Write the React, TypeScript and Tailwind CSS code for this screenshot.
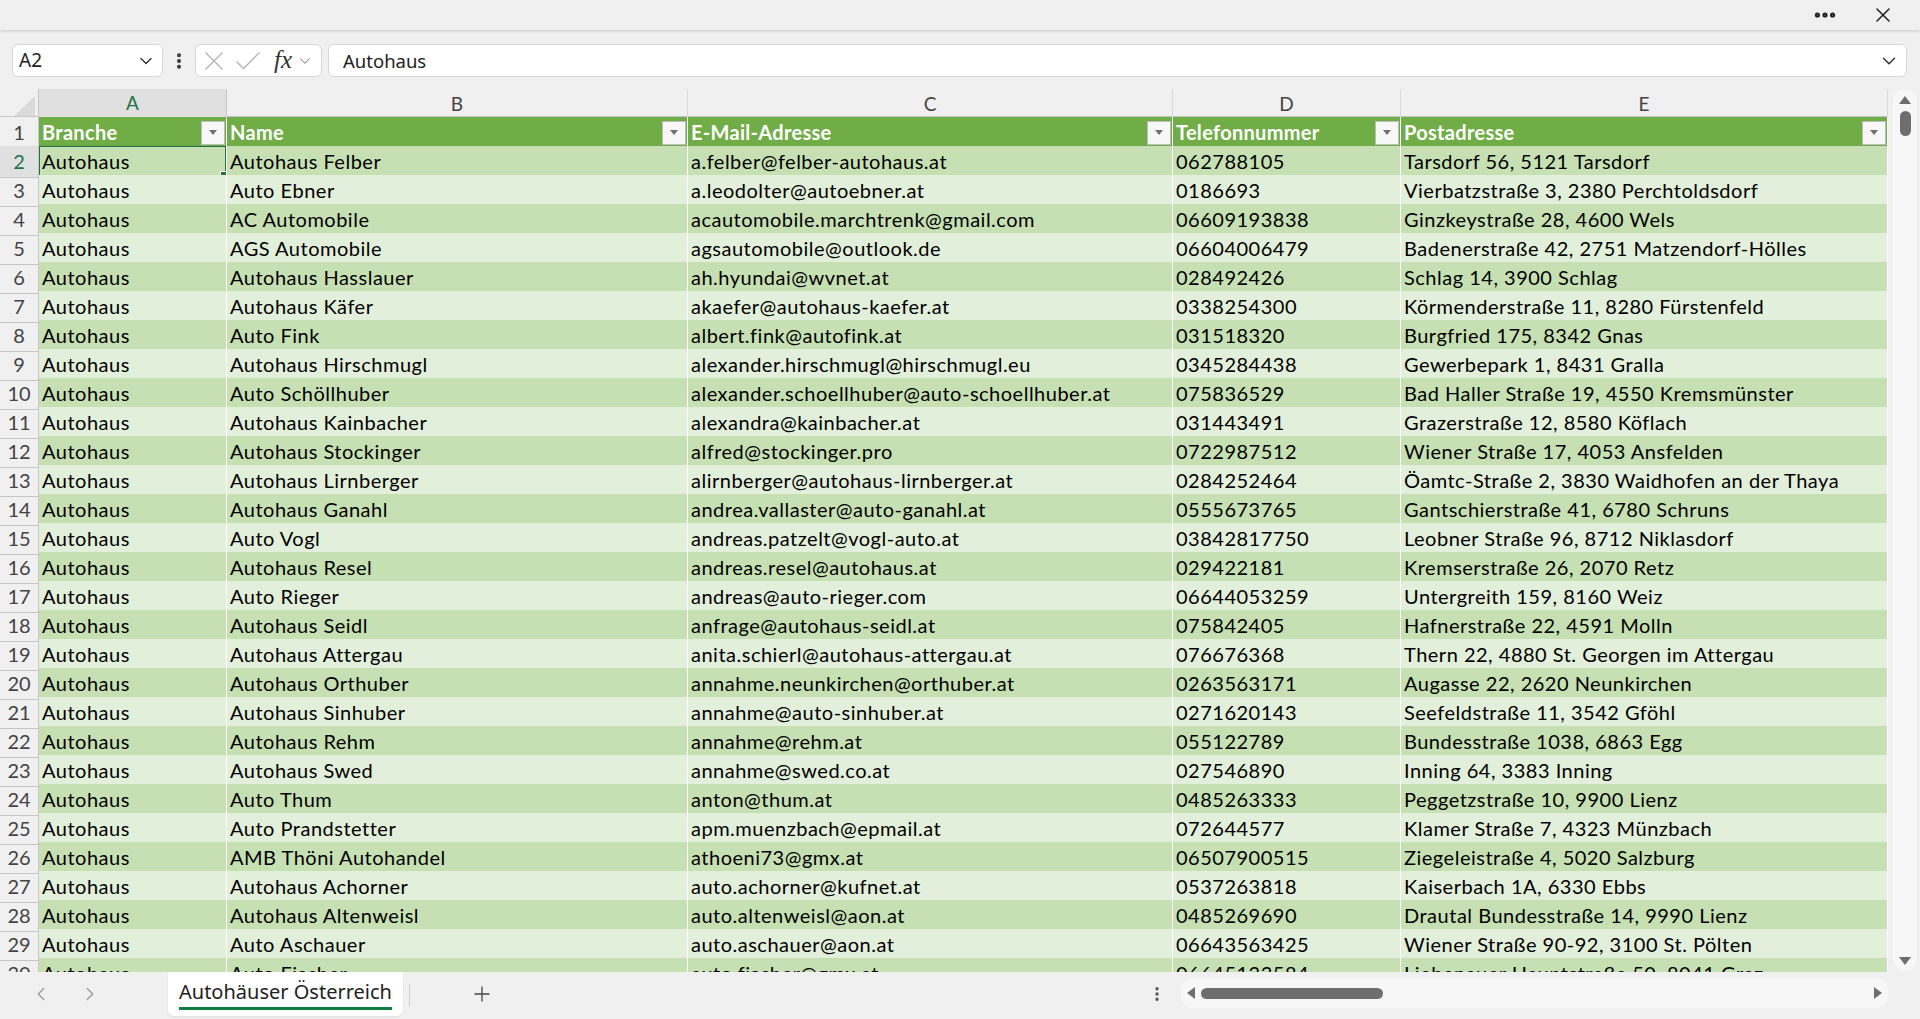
import { ChevronDown, ChevronLeft, ChevronRight, Ellipsis, EllipsisVertical, Plus, X } from 'lucide-react';

const cols = ['A', 'B', 'C', 'D', 'E'];
const headers = ['Branche', 'Name', 'E-Mail-Adresse', 'Telefonnummer', 'Postadresse'];

const rows = [
	['Autohaus Felber', 'a.felber@felber-autohaus.at', '062788105', 'Tarsdorf 56, 5121 Tarsdorf'],
	['Auto Ebner', 'a.leodolter@autoebner.at', '0186693', 'Vierbatzstraße 3, 2380 Perchtoldsdorf'],
	['AC Automobile', 'acautomobile.marchtrenk@gmail.com', '06609193838', 'Ginzkeystraße 28, 4600 Wels'],
	['AGS Automobile', 'agsautomobile@outlook.de', '06604006479', 'Badenerstraße 42, 2751 Matzendorf-Hölles'],
	['Autohaus Hasslauer', 'ah.hyundai@wvnet.at', '028492426', 'Schlag 14, 3900 Schlag'],
	['Autohaus Käfer', 'akaefer@autohaus-kaefer.at', '0338254300', 'Körmenderstraße 11, 8280 Fürstenfeld'],
	['Auto Fink', 'albert.fink@autofink.at', '031518320', 'Burgfried 175, 8342 Gnas'],
	['Autohaus Hirschmugl', 'alexander.hirschmugl@hirschmugl.eu', '0345284438', 'Gewerbepark 1, 8431 Gralla'],
	['Auto Schöllhuber', 'alexander.schoellhuber@auto-schoellhuber.at', '075836529', 'Bad Haller Straße 19, 4550 Kremsmünster'],
	['Autohaus Kainbacher', 'alexandra@kainbacher.at', '031443491', 'Grazerstraße 12, 8580 Köflach'],
	['Autohaus Stockinger', 'alfred@stockinger.pro', '0722987512', 'Wiener Straße 17, 4053 Ansfelden'],
	['Autohaus Lirnberger', 'alirnberger@autohaus-lirnberger.at', '0284252464', 'Öamtc-Straße 2, 3830 Waidhofen an der Thaya'],
	['Autohaus Ganahl', 'andrea.vallaster@auto-ganahl.at', '0555673765', 'Gantschierstraße 41, 6780 Schruns'],
	['Auto Vogl', 'andreas.patzelt@vogl-auto.at', '03842817750', 'Leobner Straße 96, 8712 Niklasdorf'],
	['Autohaus Resel', 'andreas.resel@autohaus.at', '029422181', 'Kremserstraße 26, 2070 Retz'],
	['Auto Rieger', 'andreas@auto-rieger.com', '06644053259', 'Untergreith 159, 8160 Weiz'],
	['Autohaus Seidl', 'anfrage@autohaus-seidl.at', '075842405', 'Hafnerstraße 22, 4591 Molln'],
	['Autohaus Attergau', 'anita.schierl@autohaus-attergau.at', '076676368', 'Thern 22, 4880 St. Georgen im Attergau'],
	['Autohaus Orthuber', 'annahme.neunkirchen@orthuber.at', '0263563171', 'Augasse 22, 2620 Neunkirchen'],
	['Autohaus Sinhuber', 'annahme@auto-sinhuber.at', '0271620143', 'Seefeldstraße 11, 3542 Gföhl'],
	['Autohaus Rehm', 'annahme@rehm.at', '055122789', 'Bundesstraße 1038, 6863 Egg'],
	['Autohaus Swed', 'annahme@swed.co.at', '027546890', 'Inning 64, 3383 Inning'],
	['Auto Thum', 'anton@thum.at', '0485263333', 'Peggetzstraße 10, 9900 Lienz'],
	['Auto Prandstetter', 'apm.muenzbach@epmail.at', '072644577', 'Klamer Straße 7, 4323 Münzbach'],
	['AMB Thöni Autohandel', 'athoeni73@gmx.at', '06507900515', 'Ziegeleistraße 4, 5020 Salzburg'],
	['Autohaus Achorner', 'auto.achorner@kufnet.at', '0537263818', 'Kaiserbach 1A, 6330 Ebbs'],
	['Autohaus Altenweisl', 'auto.altenweisl@aon.at', '0485269690', 'Drautal Bundesstraße 14, 9990 Lienz'],
	['Auto Aschauer', 'auto.aschauer@aon.at', '06643563425', 'Wiener Straße 90-92, 3100 St. Pölten'],
	['Auto Fischer', 'auto.fischer@gmx.at', '06645133584', 'Liebenauer Hauptstraße 50, 8041 Graz'],
];

const gridCols = 'grid grid-cols-[39px_188px_461px_485px_228px_487px]';

function FilterButton() {
	return (
		<div className="ml-auto mr-[1px] w-[24px] h-[24px] border border-[#bdbdbd] bg-[#f7f7f7] flex items-center justify-center shrink-0">
			<div className="w-0 h-0 border-x-[4px] border-x-transparent border-t-[5px] border-t-[#6f6f6f]" />
		</div>
	);
}

export default function App() {
	return (
		<div className="w-[1920px] h-[1019px] flex flex-col bg-[#f0f0f0] overflow-hidden font-['Lato',sans-serif]">
			{/* title strip */}
			<div className="h-[30px] shrink-0 bg-[#f0f0f0] shadow-[0_1px_3px_rgba(0,0,0,0.18)] flex items-center justify-end pr-[25px] gap-[33px] relative z-10">
				<Ellipsis size={26} strokeWidth={2.8} className="text-[#222]" />
				<X size={24} strokeWidth={1.5} className="text-[#222]" />
			</div>

			{/* formula bar */}
			<div className="h-[59px] shrink-0 flex items-start pt-[14px] pl-[12px] font-['Noto_Sans',sans-serif]">
				<div className="w-[151px] h-[33px] bg-white border border-[#d6d6d6] rounded-[6px] flex items-center pl-[6px] pr-[6px]">
					<span className="text-[19px] text-[#222]">A2</span>
					<ChevronDown size={20} strokeWidth={1.6} className="ml-auto text-[#333]" />
				</div>
				<div className="w-[32px] h-[33px] flex items-center justify-center">
					<EllipsisVertical size={20} strokeWidth={2.8} className="text-[#333]" />
				</div>
				<div className="w-[127px] h-[33px] bg-white border border-[#d6d6d6] rounded-[6px] flex items-center pl-[8px]">
					<svg width="20" height="20" viewBox="0 0 20 20" className="shrink-0">
						<path d="M1.5 1.5 L18.5 18.5 M18.5 1.5 L1.5 18.5" stroke="#b5b5b5" strokeWidth="1.4" fill="none" />
					</svg>
					<svg width="26" height="20" viewBox="0 0 26 20" className="ml-[11px] shrink-0">
						<path d="M1.5 10.5 L8.5 17.5 L24.5 1.5" stroke="#b5b5b5" strokeWidth="1.4" fill="none" />
					</svg>
					<span className="ml-[13px] text-[25px] italic font-['Liberation_Serif',serif] text-[#333] leading-none -mt-[3px]">fx</span>
					<ChevronDown size={18} strokeWidth={1.4} className="ml-[4px] text-[#8a8a8a]" />
				</div>
				<div className="ml-[6px] w-[1579px] h-[33px] bg-white border border-[#d6d6d6] rounded-[6px] flex items-center pl-[14px] pr-[6px]">
					<span className="text-[18.5px] text-[#222]">Autohaus</span>
					<ChevronDown size={22} strokeWidth={1.6} className="ml-auto text-[#333]" />
				</div>
			</div>

			{/* sheet */}
			<div className="flex-1 flex overflow-hidden">
				<div className="w-[1888px] shrink-0 overflow-hidden">
					{/* column letters */}
					<div className={`${gridCols} h-[28px] border-b border-[#c6c6c6]`}>
						<div className="relative border-r border-[#c6c6c6]">
							<div className="absolute right-[3px] bottom-[3px] w-0 h-0 border-l-[21px] border-l-transparent border-b-[20px] border-b-[#dadada]" />
						</div>
						{cols.map((c, i) => (
							<div
								key={c}
								className={
									i === 0
										? 'flex items-center justify-center bg-[#e0e0e0] border-r border-[#c6c6c6] border-b-2 border-b-[#217346] -mb-[1px] text-[#217346] text-[19px]'
										: 'flex items-center justify-center border-r border-[#d8d8d8] text-[#444] text-[19px]'
								}
							>
								{c}
							</div>
						))}
					</div>

					{/* header row */}
					<div className={`${gridCols} h-[29px]`}>
						<div className="flex items-center justify-center pb-[1px] border-r border-b border-[#c6c6c6] text-[#444] text-[20px]">1</div>
						{headers.map((h) => (
							<div key={h} className="flex items-center pl-[3px] bg-[#70ad47] border-r border-b border-white">
								<span className="text-white font-bold text-[20px] tracking-[0.3px] whitespace-nowrap pb-[1px]">{h}</span>
								<FilterButton />
							</div>
						))}
					</div>

					{/* data rows */}
					{rows.map((r, i) => {
						const n = i + 2;
						const bg = i % 2 === 0 ? 'bg-[#c6e0b4]' : 'bg-[#e2efda]';
						const cells = ['Autohaus', ...r];
						return (
							<div key={n} className={`${gridCols} h-[29px]`}>
								<div
									className={`flex items-center justify-center pb-[1px] border-r border-b border-[#c6c6c6] text-[20px] ${
										n === 2 ? 'text-[#217346] bg-[#e0e0e0]' : 'text-[#444]'
									}`}
								>
									{n}
								</div>
								{cells.map((v, j) => (
									<div
										key={j}
										className={`relative flex items-center pl-[3px] pb-[1px] ${bg} border-r border-b border-white overflow-hidden whitespace-nowrap text-[20px] tracking-[0.5px] text-black`}
									>
										{v}
										{n === 2 && j === 0 && (
											<>
												<div className="absolute -inset-[1px] border-2 border-[#217346]" />
												<div className="absolute -right-[1px] -bottom-[1px] w-[7px] h-[7px] bg-[#217346] border border-white" />
											</>
										)}
									</div>
								))}
							</div>
						);
					})}
				</div>

				{/* vertical scrollbar */}
				<div className="w-[32px] shrink-0 pl-[5px] pr-[3px] pb-[1px]">
					<div className="h-full bg-[#f7f7f7] rounded-[12px] flex flex-col items-center pt-[7px] pb-[6px]">
						<div className="w-0 h-0 border-x-[6px] border-x-transparent border-b-[8px] border-b-[#6e6e6e]" />
						<div className="mt-[7px] w-[11px] h-[25px] rounded-full bg-[#6e6e6e]" />
						<div className="mt-auto w-0 h-0 border-x-[6px] border-x-transparent border-t-[8px] border-t-[#6e6e6e]" />
					</div>
				</div>
			</div>

			{/* sheet tabs */}
			<div className="h-[47px] shrink-0 flex items-start font-['Noto_Sans',sans-serif]">
				<div className="h-[44px] flex items-center pl-[30px] gap-[27px] text-[#9a9a9a]">
					<ChevronLeft size={22} strokeWidth={1.5} />
					<ChevronRight size={22} strokeWidth={1.5} />
				</div>
				<div className="ml-[67px] h-[44px] bg-white rounded-b-[6px] px-[11px] flex flex-col items-center justify-center shadow-[0_1px_2px_rgba(0,0,0,0.08)]">
					<span className="text-[20px] text-[#222] leading-[26px] whitespace-nowrap">Autohäuser Österreich</span>
					<div className="w-full h-[3px] bg-[#107c41] mt-[2px]" />
				</div>
				<div className="ml-[6px] mt-[12px] w-px h-[22px] bg-[#cfcfcf]" />
				<div className="ml-[60px] h-[44px] flex items-center text-[#444]">
					<Plus size={24} strokeWidth={1.3} />
				</div>
				<div className="ml-[654px] h-[44px] flex items-center text-[#555]">
					<EllipsisVertical size={18} strokeWidth={2.4} />
				</div>
				<div className="ml-[15px] mt-[6px] w-[707px] h-[30px] bg-[#f7f7f7] rounded-[12px] flex items-center px-[6px]">
					<div className="w-0 h-0 border-y-[6px] border-y-transparent border-r-[8px] border-r-[#6e6e6e]" />
					<div className="ml-[6px] w-[182px] h-[11px] rounded-full bg-[#6e6e6e]" />
					<div className="ml-auto w-0 h-0 border-y-[6px] border-y-transparent border-l-[8px] border-l-[#6e6e6e]" />
				</div>
			</div>
		</div>
	);
}
